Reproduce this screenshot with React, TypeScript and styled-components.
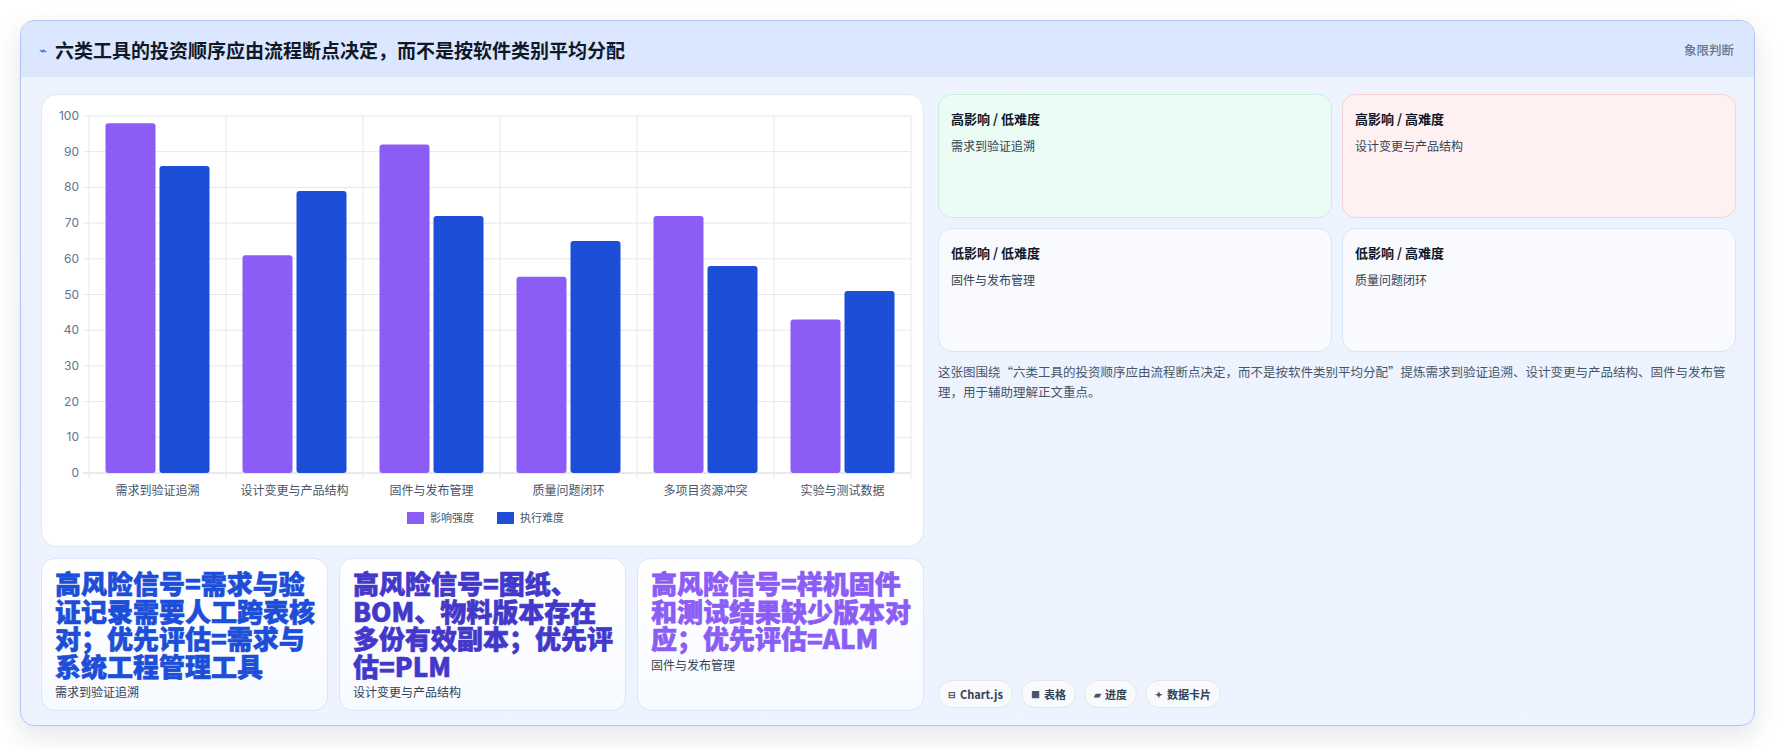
import React from "react";
import styled, { createGlobalStyle } from "styled-components";

const Global = createGlobalStyle`
  html, body { margin: 0; padding: 0; background: #ffffff; }
  body { font-family: "Inter", "Noto Sans CJK SC", sans-serif; }
  * { box-sizing: border-box; }
`;

const Page = styled.div`
  padding: 20px 22px 20px 20px;
  width: 1777px;
  height: 749px;
`;

const Panel = styled.section`
  width: 1735px;
  height: 706px;
  border: 1px solid #b4c2ee;
  border-radius: 14px;
  background: linear-gradient(180deg, #eef3fe 0%, #edf4ff 100%);
  box-shadow: 0 10px 26px rgba(30, 41, 80, 0.12);
  overflow: hidden;
  display: flex;
  flex-direction: column;
`;

const Header = styled.header`
  height: 56px;
  flex: none;
  background: #dbe7fe;
  display: flex;
  align-items: center;
  justify-content: space-between;
  padding: 0 20px 0 18px;
`;

const Title = styled.h1`
  margin: 0;
  font: 700 19px "Noto Sans CJK SC", sans-serif;
  color: #111827;
  display: flex;
  align-items: center;
  gap: 8px;
`;

const Spark = styled.span`
  color: #2563eb;
  font-size: 13px;
  font-weight: 400;
`;

const Badge = styled.span`
  font: 500 12.5px "Noto Sans CJK SC", sans-serif;
  color: #64748b;
`;

const Body = styled.div`
  flex: 1;
  display: grid;
  grid-template-columns: 883px 798px;
  gap: 14px;
  padding: 17px 20px 18px 20px;
`;

const LeftCol = styled.div`
  display: flex;
  flex-direction: column;
  gap: 11px;
`;

const ChartCard = styled.div`
  height: 453px;
  background: #ffffff;
  border: 1px solid #e2e8f0;
  border-radius: 16px;
  overflow: hidden;
`;

const Signals = styled.div`
  display: grid;
  grid-template-columns: repeat(3, 1fr);
  gap: 11px;
  height: 150px;
`;

const SignalCard = styled.div`
  background: linear-gradient(180deg, #ffffff, #f7faff);
  border: 1px solid #dde6f5;
  border-radius: 14px;
  padding: 10px 12px 10px 13px;
  display: flex;
  flex-direction: column;
`;

const SignalTitle = styled.div<{ $c: string }>`
  font: 900 26px/27.5px "Noto Sans CJK SC", sans-serif;
  color: ${(p) => p.$c};
  -webkit-text-stroke: 0.6px ${(p) => p.$c};
`;

const SignalSub = styled.div`
  font: 400 12px "Noto Sans CJK SC", sans-serif;
  color: #334155;
  margin-top: 4px;
`;

const RightCol = styled.div`
  display: flex;
  flex-direction: column;
`;

const Quads = styled.div`
  display: grid;
  grid-template-columns: 1fr 1fr;
  grid-auto-rows: 124px;
  gap: 10px;
`;

const Quad = styled.div<{ $bg: string; $bd: string }>`
  background: ${(p) => p.$bg};
  border: 1px solid ${(p) => p.$bd};
  border-radius: 14px;
  padding: 14px 12px;
`;

const QuadTitle = styled.div`
  font: 700 13px "Noto Sans CJK SC", sans-serif;
  color: #0f172a;
`;

const QuadText = styled.div`
  font: 400 12px "Noto Sans CJK SC", sans-serif;
  color: #334155;
  margin-top: 9px;
`;

const Desc = styled.p`
  margin: 10px 0 0;
  font: 400 12.5px/20px "Noto Sans CJK SC", sans-serif;
  color: #475569;
`;

const Chips = styled.div`
  margin-top: auto;
  display: flex;
  gap: 8px;
`;

const Chip = styled.span`
  height: 28px;
  padding: 0 9px;
  border-radius: 999px;
  border: 1px solid #e2e8f0;
  background: #f8fafc;
  display: inline-flex;
  align-items: center;
  gap: 4px;
  font: 700 11px "Noto Sans CJK SC", sans-serif;
  color: #334155;
`;

const ChipIcon = styled.span`
  font-size: 9px;
  color: #475569;
`;

const data = [
  { n: "需求到验证追溯", a: 98, b: 86 },
  { n: "设计变更与产品结构", a: 61, b: 79 },
  { n: "固件与发布管理", a: 92, b: 72 },
  { n: "质量问题闭环", a: 55, b: 65 },
  { n: "多项目资源冲突", a: 72, b: 58 },
  { n: "实验与测试数据", a: 43, b: 51 },
];

function Chart() {
  const x0 = 47, x1 = 869, y0 = 21, y1 = 378;
  const cw = (x1 - x0) / 6;
  const h = y1 - y0;
  const yOf = (v: number) => y1 - (v / 100) * h;
  const font = '"Noto Sans CJK SC", sans-serif';
  return (
    <svg width="883" height="453" viewBox="0 0 883 453">
      {Array.from({ length: 11 }, (_, i) => i * 10).map((v) => (
        <g key={v}>
          <line x1={x0 - 6} x2={x1} y1={yOf(v)} y2={yOf(v)} stroke={v === 0 ? "#cbd5e1" : "#e5e7eb"} />
          <text x={x0 - 10} y={yOf(v) + 4} textAnchor="end" fontSize="12" fill="#64748b" fontFamily="Inter, sans-serif">{v}</text>
        </g>
      ))}
      {Array.from({ length: 7 }, (_, i) => (
        <line key={i} x1={x0 + i * cw} x2={x0 + i * cw} y1={y0} y2={y1 + 6} stroke="#e5e7eb" />
      ))}
      {data.map((d, i) => {
        const c = x0 + i * cw + cw / 2;
        return (
          <g key={d.n}>
            <rect x={c - 52} y={yOf(d.a)} width="50" height={y1 - yOf(d.a)} rx="3" fill="#8b5cf6" />
            <rect x={c + 2} y={yOf(d.b)} width="50" height={y1 - yOf(d.b)} rx="3" fill="#1d4ed8" />
            <text x={c} y={400} textAnchor="middle" fontSize="12" fill="#475569" fontFamily={font}>{d.n}</text>
          </g>
        );
      })}
      <rect x="365" y="417" width="17" height="12" fill="#8b5cf6" />
      <text x="388" y="427" fontSize="11" fill="#475569" fontFamily={font}>影响强度</text>
      <rect x="455" y="417" width="17" height="12" fill="#1d4ed8" />
      <text x="478" y="427" fontSize="11" fill="#475569" fontFamily={font}>执行难度</text>
    </svg>
  );
}

export default function App() {
  return (
    <Page>
      <Global />
      <Panel>
        <Header>
          <Title><Spark>⌁</Spark>六类工具的投资顺序应由流程断点决定，而不是按软件类别平均分配</Title>
          <Badge>象限判断</Badge>
        </Header>
        <Body>
          <LeftCol>
            <ChartCard><Chart /></ChartCard>
            <Signals>
              <SignalCard>
                <SignalTitle $c="#1d4ed8">高风险信号=需求与验证记录需要人工跨表核对；优先评估=需求与系统工程管理工具</SignalTitle>
                <SignalSub>需求到验证追溯</SignalSub>
              </SignalCard>
              <SignalCard>
                <SignalTitle $c="#4338ca">高风险信号=图纸、BOM、物料版本存在多份有效副本；优先评估=PLM</SignalTitle>
                <SignalSub>设计变更与产品结构</SignalSub>
              </SignalCard>
              <SignalCard>
                <SignalTitle $c="#8b5cf6">高风险信号=样机固件和测试结果缺少版本对应；优先评估=ALM</SignalTitle>
                <SignalSub>固件与发布管理</SignalSub>
              </SignalCard>
            </Signals>
          </LeftCol>
          <RightCol>
            <Quads>
              <Quad $bg="#eafcf3" $bd="#c6f0d9"><QuadTitle>高影响 / 低难度</QuadTitle><QuadText>需求到验证追溯</QuadText></Quad>
              <Quad $bg="#fff0f1" $bd="#f7d0d6"><QuadTitle>高影响 / 高难度</QuadTitle><QuadText>设计变更与产品结构</QuadText></Quad>
              <Quad $bg="#f8fafd" $bd="#dbe5f5"><QuadTitle>低影响 / 低难度</QuadTitle><QuadText>固件与发布管理</QuadText></Quad>
              <Quad $bg="#f8fafd" $bd="#dbe5f5"><QuadTitle>低影响 / 高难度</QuadTitle><QuadText>质量问题闭环</QuadText></Quad>
            </Quads>
            <Desc>这张图围绕“六类工具的投资顺序应由流程断点决定，而不是按软件类别平均分配”提炼需求到验证追溯、设计变更与产品结构、固件与发布管理，用于辅助理解正文重点。</Desc>
            <Chips>
              <Chip><ChipIcon>⊟</ChipIcon>Chart.js</Chip>
              <Chip><ChipIcon>■</ChipIcon>表格</Chip>
              <Chip><ChipIcon>▰</ChipIcon>进度</Chip>
              <Chip><ChipIcon>✦</ChipIcon>数据卡片</Chip>
            </Chips>
          </RightCol>
        </Body>
      </Panel>
    </Page>
  );
}
